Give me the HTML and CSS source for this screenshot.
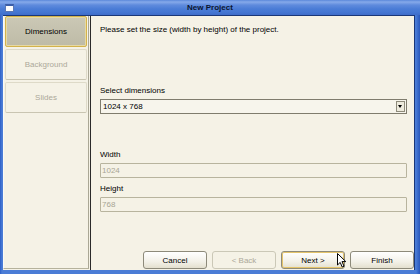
FILE: index.html
```html
<!DOCTYPE html>
<html>
<head>
    <title>New Project</title>
    <link rel="stylesheet" href="styles.css">
</head>
<body>
    <div class="window">
        <div class="titlebar">
            <span class="win-icon"></span>
            <span class="title">New Project</span>
        </div>
        <div class="main">
            <div class="sidebar">
                <div class="step active">Dimensions</div>
                <div class="step">Background</div>
                <div class="step">Slides</div>
            </div>
            <div class="content">
                <p class="intro">Please set the size (width by height) of the project.</p>
                <div class="field select-field">
                    <label>Select dimensions</label>
                    <div class="select">
                        <span>1024 x 768</span>
                        <span class="select-arrow"></span>
                    </div>
                </div>
                <div class="field width-field">
                    <label>Width</label>
                    <div class="input">1024</div>
                </div>
                <div class="field">
                    <label>Height</label>
                    <div class="input">768</div>
                </div>
                <div class="button-group">
                    <button>Cancel</button>
                    <button disabled>&lt; Back</button>
                    <button class="focused">Next &gt;</button>
                    <button>Finish</button>
                </div>
            </div>
        </div>
        <svg class="cursor" width="10" height="15" viewBox="0 0 10 15">
            <polygon points="0.5,0.5 0.5,12 3.2,9.4 5.2,14 7,13.2 5,8.6 8.8,8.6" fill="#fff" stroke="#000" stroke-width="1"/>
        </svg>
    </div>
</body>
</html>
```

FILE: styles.css
```css
body {
    margin: 0;
    font-family: "Liberation Sans", Arial, sans-serif;
    font-size: 8px;
    line-height: 10px;
    color: #000;
}
.window {
    position: relative;
    width: 420px;
    height: 274px;
    box-sizing: border-box;
    padding: 0 5px 4px 3px;
    background: linear-gradient(90deg, #2d5fc6 0, #4a7cd6 2px, #4a7cd6 416px, #3868c8 418px, #2a58bb 420px);
    display: flex;
    flex-direction: column;
}
.titlebar {
    height: 15px;
    margin: 0 -5px 0 -3px;
    background: linear-gradient(#5b88da 0, #86aaea 2px, #5f8bdd 5px, #4a7cd6 9px, #4577d3 12px, #3e6dca 15px);
    position: relative;
    text-align: center;
    line-height: 15px;
}
.win-icon {
    position: absolute;
    left: 5px;
    top: 4px;
    width: 7px;
    height: 5px;
    background: #fdfdfd;
    border: 1px solid #5a77b4;
    border-top: 2px solid #3b5ea8;
}
.title {
    font-weight: bold;
    color: #0b1530;
}
.main {
    flex: 1;
    display: flex;
    background-color: #f5f2e6;
    border-top: 1px solid #1a3778;
    border-right: 1px solid #1a3778;
}
.sidebar {
    width: 86px;
    height: 253px;
    box-sizing: border-box;
    margin-right: 1px;
    padding: 0 1px;
    border-left: 1px solid #fbfaf4;
    border-right: 1px solid #aaa795;
    border-bottom: 1px solid #b5b29c;
    display: flex;
    flex-direction: column;
    gap: 2px;
}
.step {
    height: 31px;
    box-sizing: border-box;
    border: 1px solid #dedac8;
    border-bottom-color: #c9c5b2;
    border-radius: 2px;
    display: flex;
    align-items: center;
    justify-content: center;
    color: #aca899;
}
.step.active {
    background: linear-gradient(#cbc8b5, #bebba7);
    border: 1px solid #d3b34c;
    box-shadow: inset 0 0 0 1px #e6d9a4;
    color: #000;
}
.content {
    flex: 1;
    display: flex;
    flex-direction: column;
    border-left: 1px solid #2a2a2a;
    padding: 9px 0 1px 9px;
}
.intro {
    margin: 0;
}
.field {
    display: flex;
    flex-direction: column;
    gap: 3px;
    margin-right: 7px;
}
.select-field {
    margin-top: 51px;
}
.width-field {
    margin-top: 36px;
    margin-bottom: 6px;
}
.select {
    height: 15px;
    box-sizing: border-box;
    border: 1px solid #7f7c6d;
    background: #f7f5ec;
    display: flex;
    align-items: center;
    justify-content: space-between;
    padding-left: 2px;
}
.select-arrow {
    width: 9px;
    height: 11px;
    box-sizing: border-box;
    margin-right: 1px;
    border: 1px solid #8e8b7b;
    background: #eeebdd;
    position: relative;
}
.select-arrow::after {
    content: "";
    position: absolute;
    left: 1px;
    top: 3px;
    border-left: 2.5px solid transparent;
    border-right: 2.5px solid transparent;
    border-top: 3px solid #000;
}
.input {
    height: 15px;
    box-sizing: border-box;
    border: 1px solid #b8b49e;
    border-radius: 1px;
    background: #f5f2e6;
    color: #a8a594;
    padding-left: 1px;
    line-height: 13px;
}
.button-group {
    margin-top: auto;
    display: flex;
    justify-content: flex-end;
    gap: 5px;
}
button {
    width: 64px;
    height: 18px;
    padding: 0;
    font-family: inherit;
    font-size: 8px;
    color: #000;
    border: 1px solid #8d8a7a;
    border-radius: 3px;
    background: linear-gradient(#ffffff, #f3f1e8 60%, #e4e0cf);
}
button.focused {
    box-shadow: inset 0 0 0 1px #e4c46b;
}
button:disabled {
    border-color: #cbc8b7;
    background: #f5f2e6;
    color: #aca899;
}
.cursor {
    position: absolute;
    left: 337px;
    top: 253px;
}
```
